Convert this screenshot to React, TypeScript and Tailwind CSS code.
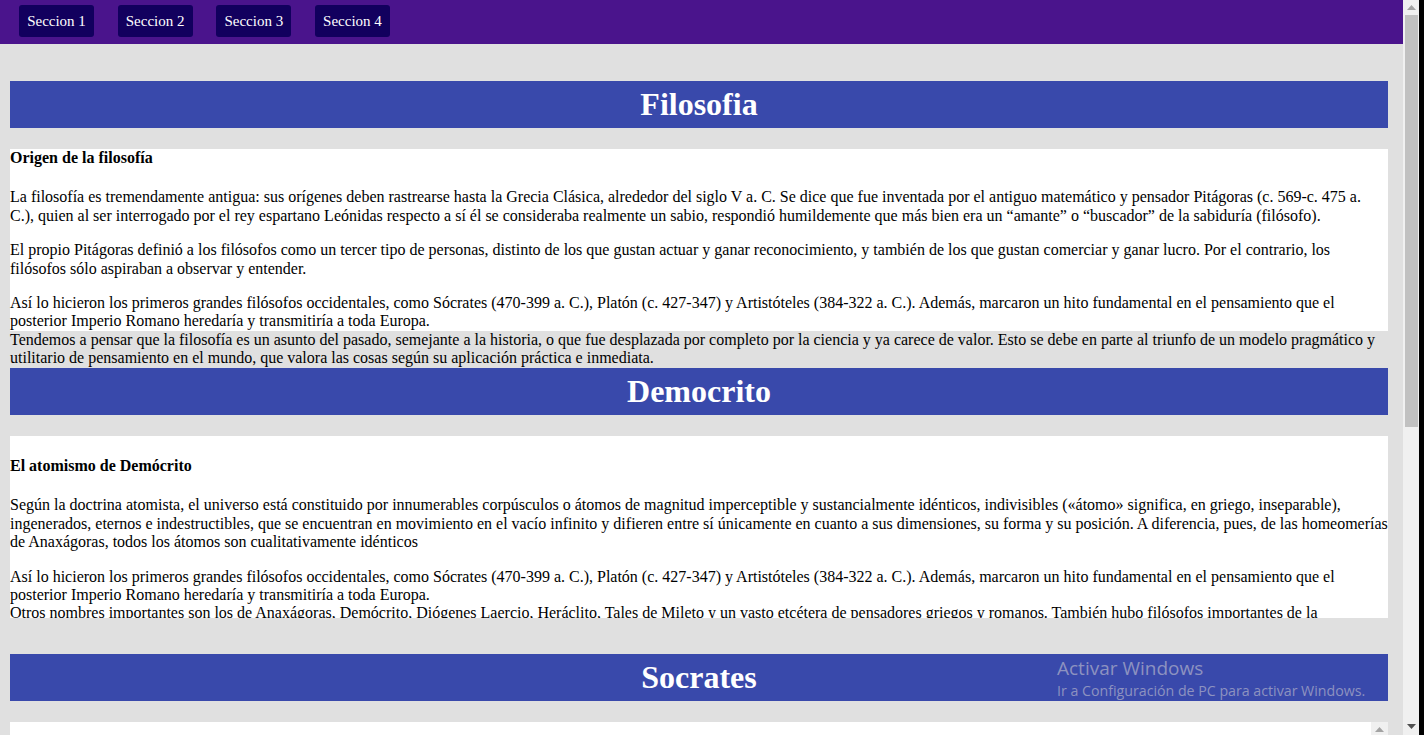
import React from "react"

const serif = { fontFamily: '"Liberation Serif", "Times New Roman", serif' }

function Arrow({ up, color }: { up?: boolean; color: string }) {
  return (
    <svg width="9" height="5" viewBox="0 0 9 5">
      <polygon points={up ? "0,5 4.5,0 9,5" : "0,0 9,0 4.5,5"} fill={color} />
    </svg>
  )
}

function Header({ title, className }: { title: string; className: string }) {
  return (
    <h1
      className={`ml-[10px] w-[1378px] h-[47px] bg-[#3949ab] flex items-center justify-center text-white text-[32px] font-bold leading-[1.15] ${className}`}
    >
      {title}
    </h1>
  )
}

export default function App() {
  return (
    <div className="flex h-[735px] w-[1424px] overflow-hidden bg-black" style={serif}>
      <div className="relative w-[1403px] h-full overflow-hidden bg-[#e0e0e0] text-black">
        <nav className="h-[44px] bg-[#4a148c] flex items-start gap-[23.67px] pl-[19px] pt-[5px]">
          {["Seccion 1", "Seccion 2", "Seccion 3", "Seccion 4"].map((s) => (
            <button key={s} className="h-[32px] w-[75px] rounded-[3px] bg-[#12005e] text-white text-[15px]">
              {s}
            </button>
          ))}
        </nav>

        {/* Filosofia */}
        <Header title="Filosofia" className="mt-[37px]" />
        <div className="mt-[21px] ml-[10px] w-[1378px] h-[182px] bg-white text-[16px] leading-[1.15]">
          <h4 className="font-bold">Origen de la filosofía</h4>
          <p className="mt-[21px]">
            La filosofía es tremendamente antigua: sus orígenes deben rastrearse hasta la Grecia Clásica, alrededor del
            siglo V a. C. Se dice que fue inventada por el antiguo matemático y pensador Pitágoras (c. 569-c. 475 a. C.),
            quien al ser interrogado por el rey espartano Leónidas respecto a sí él se consideraba realmente un sabio,
            respondió humildemente que más bien era un “amante” o “buscador” de la sabiduría (filósofo).
          </p>
          <p className="mt-[16px]">
            El propio Pitágoras definió a los filósofos como un tercer tipo de personas, distinto de los que gustan actuar
            y ganar reconocimiento, y también de los que gustan comerciar y ganar lucro. Por el contrario, los filósofos
            sólo aspiraban a observar y entender.
          </p>
          <p className="mt-[16px]">
            Así lo hicieron los primeros grandes filósofos occidentales, como Sócrates (470-399 a. C.), Platón (c.
            427-347) y Artistóteles (384-322 a. C.). Además, marcaron un hito fundamental en el pensamiento que el
            posterior Imperio Romano heredaría y transmitiría a toda Europa.
            <br />
            Tendemos a pensar que la filosofía es un asunto del pasado, semejante a la historia, o que fue desplazada por
            completo por la ciencia y ya carece de valor. Esto se debe en parte al triunfo de un modelo pragmático y
            utilitario de pensamiento en el mundo, que valora las cosas según su aplicación práctica e inmediata.
          </p>
        </div>

        {/* Democrito */}
        <Header title="Democrito" className="mt-[37px]" />
        <div className="mt-[21px] ml-[10px] w-[1378px] h-[182px] overflow-hidden bg-white pt-[21px] text-[16px] leading-[1.15]">
          <h4 className="font-bold">El atomismo de Demócrito</h4>
          <p className="mt-[21px]">
            Según la doctrina atomista, el universo está constituido por innumerables corpúsculos o átomos de magnitud
            imperceptible y sustancialmente idénticos, indivisibles («átomo» significa, en griego, inseparable),
            ingenerados, eternos e indestructibles, que se encuentran en movimiento en el vacío infinito y difieren entre
            sí únicamente en cuanto a sus dimensiones, su forma y su posición. A diferencia, pues, de las homeomerías de
            Anaxágoras, todos los átomos son cualitativamente idénticos
          </p>
          <p className="mt-[16px]">
            Así lo hicieron los primeros grandes filósofos occidentales, como Sócrates (470-399 a. C.), Platón (c.
            427-347) y Artistóteles (384-322 a. C.). Además, marcaron un hito fundamental en el pensamiento que el
            posterior Imperio Romano heredaría y transmitiría a toda Europa.
            <br />
            Otros nombres importantes son los de Anaxágoras, Demócrito, Diógenes Laercio, Heráclito, Tales de Mileto y un
            vasto etcétera de pensadores griegos y romanos. También hubo filósofos importantes de la civilización
            medieval, como San Agustín o Santo Tomás de Aquino.
          </p>
        </div>

        {/* Socrates */}
        <Header title="Socrates" className="mt-[36px]" />
        <div className="mt-[21px] ml-[10px] w-[1378px] h-[182px] bg-white flex">
          <div className="flex-1" />
          <div className="w-[17px] bg-[#f0f0f0] flex justify-center pt-[5px]">
            <div className="h-[5px]">
              <Arrow up color="#a3a3a3" />
            </div>
          </div>
        </div>

        {/* watermark */}
        <div
          className="absolute left-[1057px] top-[655px] text-[#8d92c0] pointer-events-none"
          style={{ fontFamily: '"Open Sans", "Noto Sans", sans-serif' }}
        >
          <div className="text-[19px] leading-[27px]">Activar Windows</div>
          <div className="text-[14.2px] leading-[18px]">Ir a Configuración de PC para activar Windows.</div>
        </div>
      </div>

      {/* page scrollbar */}
      <div className="w-[16px] h-full bg-[#f0f0f0] flex flex-col items-center">
        <div className="h-[15px] flex items-center justify-center">
          <Arrow up color="#a3a3a3" />
        </div>
        <div className="w-[13px] h-[412px] bg-[#c1c1c1]" />
        <div className="flex-1" />
        <div className="h-[17px] flex items-center justify-center">
          <Arrow color="#505050" />
        </div>
      </div>
      <div className="w-[5px] h-full bg-black" />
    </div>
  )
}
